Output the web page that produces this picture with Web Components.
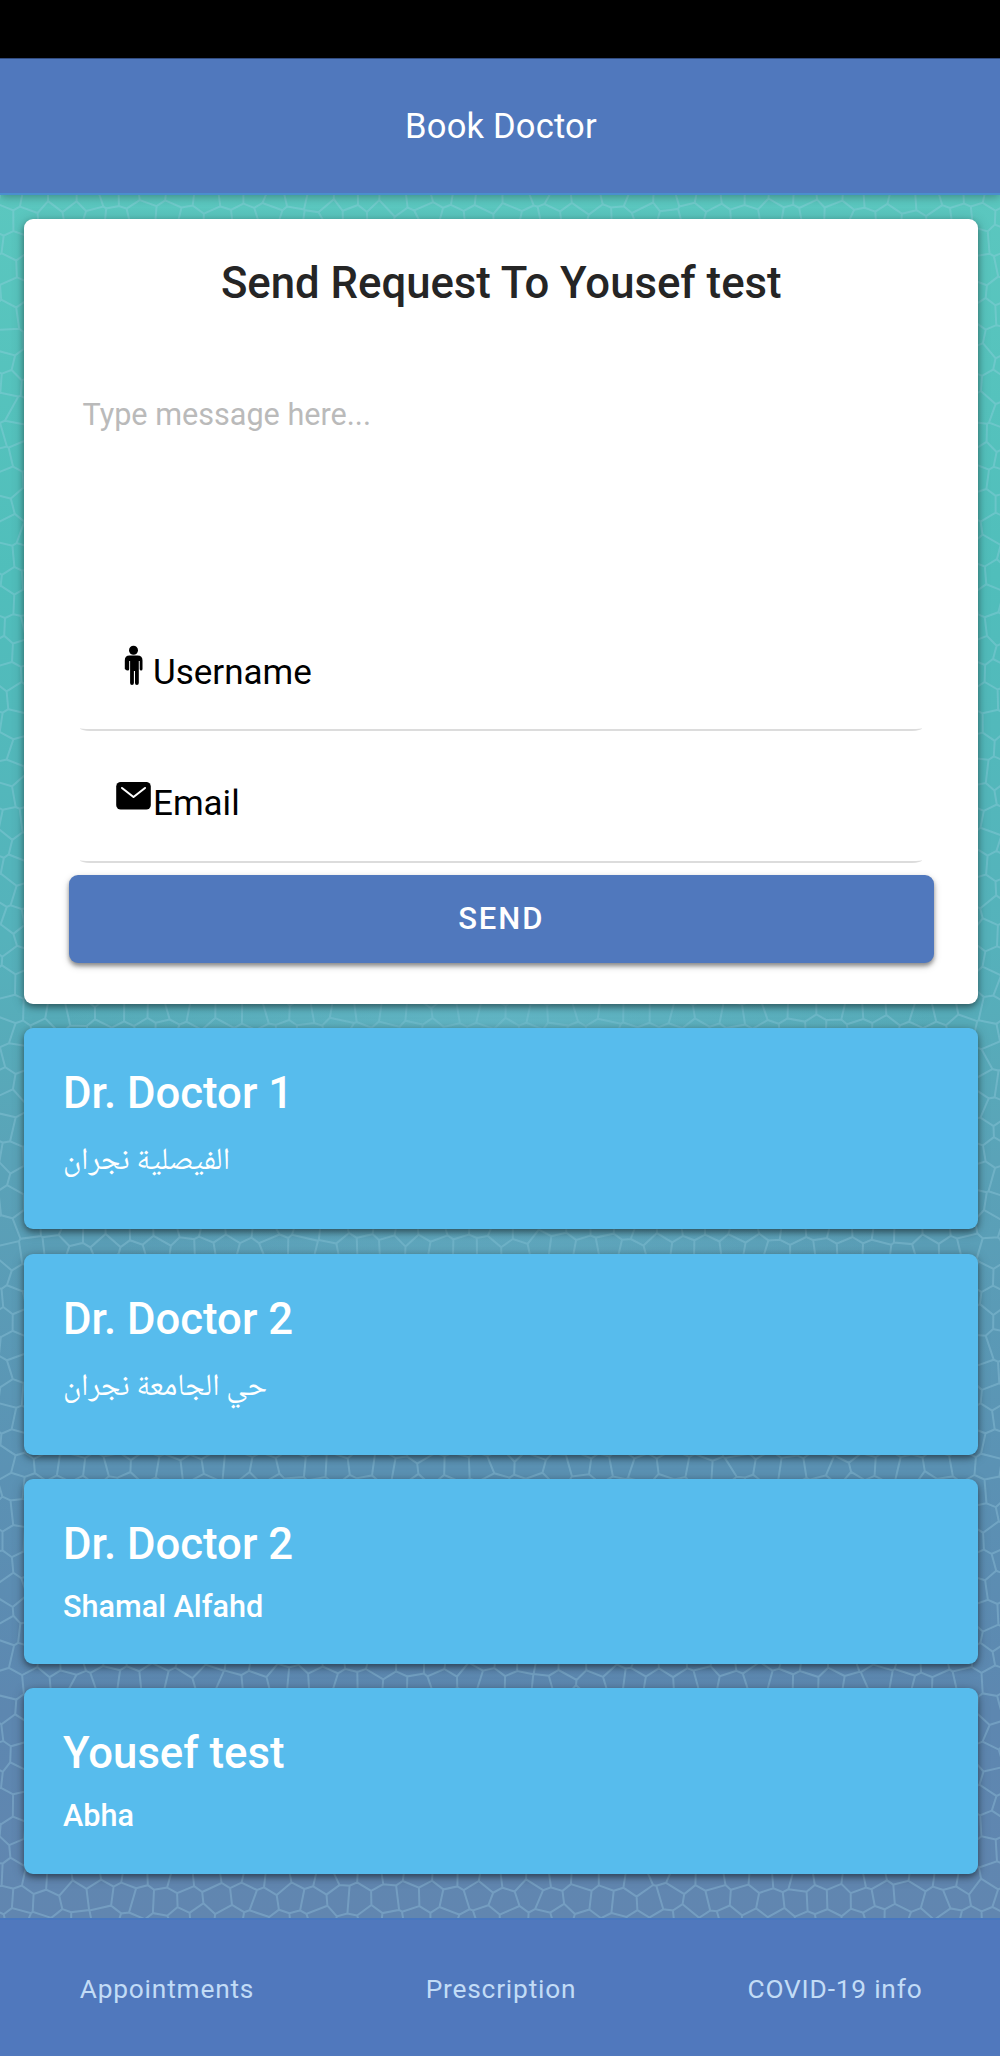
<!DOCTYPE html>
<html lang="en"><head><meta charset="utf-8"><title>Book Doctor</title>
<style>html,body{margin:0;padding:0}body{font-family:Roboto,sans-serif;width:1000px;height:2056px;overflow:hidden}</style></head>
<body>
<booking-page>
  <app-bar slot="header">Book Doctor</app-bar>
  <request-form heading="Send Request To Yousef test" placeholder="Type message here...">
    <form-field label="Username"><field-icon name="man"></field-icon></form-field>
    <form-field label="Email"><field-icon name="mail"></field-icon></form-field>
    <send-button slot="action">SEND</send-button>
  </request-form>
  <doctor-card name="Dr. Doctor 1" arabic style="--h:201px">الفيصلية نجران</doctor-card>
  <doctor-card name="Dr. Doctor 2" arabic style="--h:201px;margin-top:25px">حي الجامعة نجران</doctor-card>
  <doctor-card name="Dr. Doctor 2" style="--h:185px">Shamal Alfahd</doctor-card>
  <doctor-card name="Yousef test" style="--h:185.5px">Abha</doctor-card>
  <tab-bar slot="footer"><tab-link>Appointments</tab-link><tab-link>Prescription</tab-link><tab-link>COVID-19 info</tab-link></tab-bar>
</booking-page>
<script>
const define = (name, html, setup) => customElements.define(name, class extends HTMLElement {
  connectedCallback() {
    if (this.shadowRoot) return;
    const root = this.attachShadow({mode: 'open'});
    root.innerHTML = html;
    if (setup) setup(this, root);
  }
});

define('booking-page', `<style>
:host{display:flex;flex-direction:column;height:2056px;width:1000px;color:#fff}
.status{height:58px;background:#000;flex:none}
main{flex:1;position:relative;padding:24px 22px 0 24px;box-sizing:border-box;isolation:isolate}
cell-backdrop{position:absolute;inset:0;z-index:-1}
</style><div class="status"></div><slot name="header"></slot><main><cell-backdrop></cell-backdrop><slot></slot></main><slot name="footer"></slot>`);

define('app-bar', `<style>
:host{display:flex;justify-content:center;height:136.5px;flex:none;background:linear-gradient(#324c80 0 1px,#5078bd 1px 135px,#4a8fce 135px);box-shadow:0 2px 9px rgba(0,0,0,.3);position:relative;z-index:1}
span{font-size:34.5px;line-height:60px;margin:38px 0 0 2px;letter-spacing:.2px}
</style><span><slot></slot></span>`);

define('request-form', `<style>
:host{display:flex;flex-direction:column;height:785.5px;box-sizing:border-box;background:#fff;border-radius:9px;box-shadow:0 3px 6px rgba(0,0,0,.38),0 2px 14px rgba(0,0,0,.2);padding:34.5px 44px 0 44.5px;color:#000}
h2{margin:0;font-size:43.7px;line-height:60px;font-weight:500;text-align:center;color:#252525;white-space:nowrap}
.msg{height:214.5px;margin-top:72px;padding-left:14px;font-size:30.6px;line-height:60px;color:#bababa}
.fields{margin:0 12px 12.5px 11.5px}
</style><h2></h2><div class="msg"></div><div class="fields"><slot></slot></div><slot name="action"></slot>`, (el, root) => {
  root.querySelector('h2').textContent = el.getAttribute('heading');
  root.querySelector('.msg').textContent = el.getAttribute('placeholder');
});

define('form-field', `<style>
:host{display:flex;height:131.5px;box-sizing:border-box;padding:43px 0 0 36px;border-bottom:2.5px solid #dcdcdc;border-radius:0 0 10px 10px / 0 0 3px 3px}
span{font-size:35px;line-height:60px}
</style><slot></slot><span></span>`, (el, root) => {
  root.querySelector('span').textContent = el.getAttribute('label');
});

define('field-icon', `<style>:host{display:block;width:37px;height:60px;flex:none}svg{display:block}</style><svg width="37" height="48" fill="#000"></svg>`, (el, root) => {
  root.querySelector('svg').innerHTML = el.getAttribute('name') === 'man'
    ? '<circle cx="17.5" cy="7.2" r="4.5"/><path d="M13.5 12.5h8q5 0 5 5v8.5q0 1.5-1.4 1.5t-1.4-1.5v-8h-.9v22q0 2-1.9 2t-1.9-2V28h-1.1v12q0 2-1.9 2t-1.9-2V18h-.9v8q0 1.5-1.4 1.5T8.8 26v-8.5q0-5 4.7-5z"/>'
    : '<rect x=".2" y="8" width="34.6" height="27.6" rx="4.5"/><path d="M6 14l11.5 9L29 14" fill="none" stroke="#fff" stroke-width="2.1" stroke-linecap="round" stroke-linejoin="round"/>';
});

define('send-button', `<style>
:host{display:flex;align-items:center;justify-content:center;height:88px;flex:none;background:#5078bd;color:#fff;border-radius:9px;box-shadow:0 3px 4px rgba(0,0,0,.38),0 3px 9px rgba(0,0,0,.16);font-size:31px;font-weight:500;letter-spacing:1.9px;line-height:60px}
</style><slot></slot>`);

define('doctor-card', `<style>
:host{display:flex;flex-direction:column;height:var(--h);margin-top:24px;box-sizing:border-box;background:#57bced;border-radius:9px;box-shadow:0 3px 6px rgba(0,0,0,.42),0 2px 14px rgba(0,0,0,.2);padding:34.5px 39px 0;white-space:nowrap}
h3{margin:0;font-size:43.7px;line-height:60px;font-weight:500}
p{margin:3.5px 0 0;font-size:30.6px;line-height:60px;font-weight:500}
:host([arabic]) p{font-family:"Noto Naskh Arabic","Noto Sans Arabic","DejaVu Sans",sans-serif;font-weight:400;font-size:30.8px;margin-top:10px}
</style><h3></h3><p><slot></slot></p>`, (el, root) => {
  root.querySelector('h3').textContent = el.getAttribute('name');
});

define('tab-bar', `<style>
:host{display:flex;height:138px;flex:none;background:linear-gradient(#4877bf 0 2px,#5078bd 2px)}
</style><slot></slot>`);

define('tab-link', `<style>
:host{display:flex;justify-content:center;flex:none;width:334px;font-size:26.3px;line-height:60px;letter-spacing:.8px;color:#c2dcf6;padding-top:40.5px;box-sizing:border-box}
</style><slot></slot>`);

/* Mosaic of convex cells: Voronoi regions of a jittered grid */
define('cell-backdrop', `<style>
:host{display:block;overflow:hidden;background:linear-gradient(#5bc7bf 0,#50bebb 22%,#55b2bb 43%,#5aa3b8 56%,#5b92b4 74%,#5d87b0 88%,#6186b0 100%)}
svg{display:block}
</style><svg width="1000" height="1724"><defs><radialGradient id="glow" gradientUnits="userSpaceOnUse" cx="500" cy="830" r="440"><stop offset="0" stop-color="#6cbfd0" stop-opacity=".5"/><stop offset="1" stop-color="#6cbfd0" stop-opacity="0"/></radialGradient></defs><path fill="none" stroke="#a3d3e8" stroke-opacity=".3" stroke-width="2"/><rect width="1000" height="1724" fill="url(#glow)"/></svg>`, (el, root) => {
  const SX = 24, SY = 24, C = 45, R = 75;
  let seed = 7;
  const rnd = () => (seed = (seed * 16807) % 2147483647) / 2147483647;
  const pts = [];
  for (let r = 0; r < R; r++) { pts.push([]); for (let c = 0; c < C; c++)
    pts[r].push([(c - 1 + (r % 2 ? .5 : 0) + (rnd() - .5) * .5) * SX, (r - 1 + (rnd() - .5) * .5) * SY]); }
  let d = '';
  for (let r = 0; r < R; r++) for (let c = 0; c < C; c++) {
    const [x, y] = pts[r][c];
    let poly = [[x - 30, y - 30], [x + 30, y - 30], [x + 30, y + 30], [x - 30, y + 30]];
    for (let i = Math.max(0, r - 2); i <= Math.min(R - 1, r + 2); i++)
      for (let j = Math.max(0, c - 2); j <= Math.min(C - 1, c + 2); j++) {
        if (i === r && j === c) continue;
        const [px, py] = pts[i][j], nx = px - x, ny = py - y, k = (px * px + py * py - x * x - y * y) / 2;
        const f = p => p[0] * nx + p[1] * ny - k, out = [];
        poly.forEach((a, n) => {
          const b = poly[(n + 1) % poly.length], fa = f(a), fb = f(b);
          if (fa <= 0) out.push(a);
          if (fa * fb < 0) { const t = fa / (fa - fb); out.push([a[0] + t * (b[0] - a[0]), a[1] + t * (b[1] - a[1])]); }
        });
        poly = out;
      }
    d += 'M' + poly.map(p => p[0].toFixed(1) + ' ' + p[1].toFixed(1)).join('L') + 'Z';
  }
  root.querySelector('path').setAttribute('d', d);
});
</script>
</body></html>
